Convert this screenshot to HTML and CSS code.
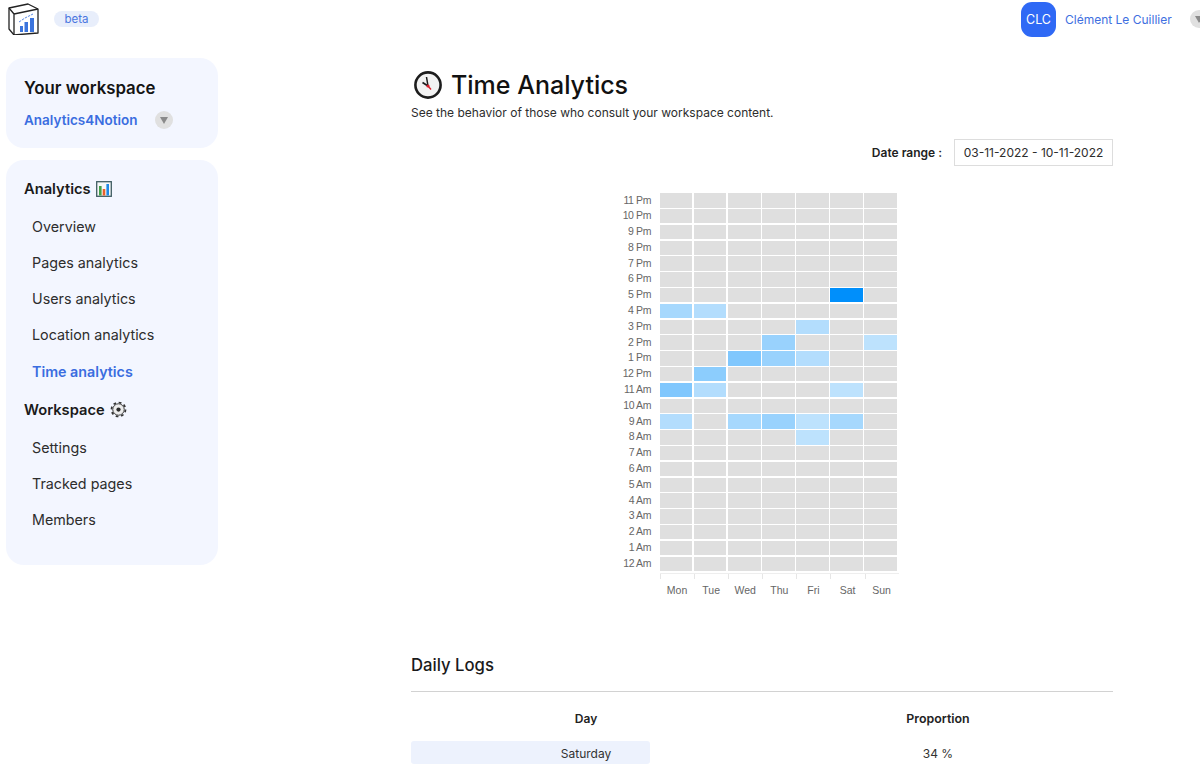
FILE: index.html
```html
<!DOCTYPE html>
<html lang="en">
<head>
<meta charset="utf-8">
<title>Time Analytics</title>
<link rel="stylesheet" href="styles.css">
</head>
<body>
<header class="topbar">
  <div class="brand">
    <svg class="logo" viewBox="0 0 32 32" fill="none" stroke="#222" stroke-width="1.3" stroke-linejoin="round">
      <path d="M1 5 L20 1 L30 6 L30 30 L6 32 L1 26 Z"/>
      <path d="M1 5 L6 11 L30 6 M6 11 L6 32"/>
      <g fill="#3b74dd" stroke="none">
        <rect x="12" y="23" width="3" height="6"/><rect x="16.5" y="19" width="3.5" height="10"/><rect x="22" y="15" width="4" height="14"/>
      </g>
      <path d="M11 19 L17 15 L25 11" stroke="#5d8be6" stroke-width="1" stroke-dasharray="2.5 1"/>
    </svg>
    <span class="beta">beta</span>
  </div>
  <div class="user">
    <span class="avatar">CLC</span>
    <span class="user-name">Clément Le Cuillier</span>
    <span class="caret-btn"><i class="caret"></i></span>
  </div>
</header>
<div class="page">
  <aside class="sidebar">
    <section class="card workspace">
      <h2>Your workspace</h2>
      <div class="ws-select"><span>Analytics4Notion</span><span class="caret-btn"><i class="caret"></i></span></div>
    </section>
    <nav class="card nav">
      <h3>Analytics
        <svg class="nav-icon" viewBox="0 0 16 16">
          <rect x=".7" y=".7" width="14.6" height="14.6" fill="#f4f8f8" stroke="#3f5d63" stroke-width="1.3"/>
          <rect x="3" y="5" width="2.6" height="9.5" fill="#43a047"/><rect x="6.7" y="8" width="2.6" height="6.5" fill="#e8602c"/><rect x="10.4" y="3" width="2.6" height="11.5" fill="#1e88e5"/>
        </svg>
      </h3>
      <a href="#">Overview</a>
      <a href="#">Pages analytics</a>
      <a href="#">Users analytics</a>
      <a href="#">Location analytics</a>
      <a href="#" class="active">Time analytics</a>
      <h3>Workspace
        <svg class="nav-icon gear" viewBox="0 0 16 16" fill="none" stroke="#333">
          <circle cx="8" cy="8" r="6.6" stroke-width="1.6" stroke-dasharray="2.6 2.58"/>
          <circle cx="8" cy="8" r="5.4" fill="#ececec" stroke-width=".9"/>
          <circle cx="8" cy="8" r="2" fill="#2a2a2a" stroke="none"/>
        </svg>
      </h3>
      <a href="#">Settings</a>
      <a href="#">Tracked pages</a>
      <a href="#">Members</a>
    </nav>
  </aside>
  <main class="main">
    <h1>
      <svg class="clock" viewBox="0 0 28 28">
        <circle cx="14" cy="14" r="12.6" fill="#f2f2f2" stroke="#1c1c1c" stroke-width="2.6"/>
        <path d="M14 15 L12.5 6" stroke="#1c1c1c" stroke-width="1.5"/>
        <path d="M14 15 L8.5 11.5" stroke="#1c1c1c" stroke-width="1.7"/>
        <path d="M14 15 L17 18.5" stroke="#d81e2c" stroke-width="1.4"/>
        <circle cx="14" cy="15" r="1.6" fill="#d81e2c"/>
      </svg>
      Time Analytics
    </h1>
    <p class="lead">See the behavior of those who consult your workspace content.</p>
    <div class="range"><strong>Date range :</strong><span class="range-input">03-11-2022 - 10-11-2022</span></div>
    <div class="chart">
      <div class="hm-row"><span class="hm-label">11 Pm</span><i></i><i></i><i></i><i></i><i></i><i></i><i></i></div>
      <div class="hm-row"><span class="hm-label">10 Pm</span><i></i><i></i><i></i><i></i><i></i><i></i><i></i></div>
      <div class="hm-row"><span class="hm-label">9 Pm</span><i></i><i></i><i></i><i></i><i></i><i></i><i></i></div>
      <div class="hm-row"><span class="hm-label">8 Pm</span><i></i><i></i><i></i><i></i><i></i><i></i><i></i></div>
      <div class="hm-row"><span class="hm-label">7 Pm</span><i></i><i></i><i></i><i></i><i></i><i></i><i></i></div>
      <div class="hm-row"><span class="hm-label">6 Pm</span><i></i><i></i><i></i><i></i><i></i><i></i><i></i></div>
      <div class="hm-row"><span class="hm-label">5 Pm</span><i></i><i></i><i></i><i></i><i></i><i class="max"></i><i></i></div>
      <div class="hm-row"><span class="hm-label">4 Pm</span><i class="l3"></i><i class="l4"></i><i></i><i></i><i></i><i></i><i></i></div>
      <div class="hm-row"><span class="hm-label">3 Pm</span><i></i><i></i><i></i><i></i><i class="l4"></i><i></i><i></i></div>
      <div class="hm-row"><span class="hm-label">2 Pm</span><i></i><i></i><i></i><i class="l2"></i><i></i><i></i><i class="l5"></i></div>
      <div class="hm-row"><span class="hm-label">1 Pm</span><i></i><i></i><i class="l1"></i><i class="l2"></i><i class="l4"></i><i></i><i></i></div>
      <div class="hm-row"><span class="hm-label">12 Pm</span><i></i><i class="l0"></i><i></i><i></i><i></i><i></i><i></i></div>
      <div class="hm-row"><span class="hm-label">11 Am</span><i class="l1"></i><i class="l4"></i><i></i><i></i><i></i><i class="l5"></i><i></i></div>
      <div class="hm-row"><span class="hm-label">10 Am</span><i></i><i></i><i></i><i></i><i></i><i></i><i></i></div>
      <div class="hm-row"><span class="hm-label">9 Am</span><i class="l4"></i><i></i><i class="l3"></i><i class="l2"></i><i class="l5"></i><i class="l3"></i><i></i></div>
      <div class="hm-row"><span class="hm-label">8 Am</span><i></i><i></i><i></i><i></i><i class="l5"></i><i></i><i></i></div>
      <div class="hm-row"><span class="hm-label">7 Am</span><i></i><i></i><i></i><i></i><i></i><i></i><i></i></div>
      <div class="hm-row"><span class="hm-label">6 Am</span><i></i><i></i><i></i><i></i><i></i><i></i><i></i></div>
      <div class="hm-row"><span class="hm-label">5 Am</span><i></i><i></i><i></i><i></i><i></i><i></i><i></i></div>
      <div class="hm-row"><span class="hm-label">4 Am</span><i></i><i></i><i></i><i></i><i></i><i></i><i></i></div>
      <div class="hm-row"><span class="hm-label">3 Am</span><i></i><i></i><i></i><i></i><i></i><i></i><i></i></div>
      <div class="hm-row"><span class="hm-label">2 Am</span><i></i><i></i><i></i><i></i><i></i><i></i><i></i></div>
      <div class="hm-row"><span class="hm-label">1 Am</span><i></i><i></i><i></i><i></i><i></i><i></i><i></i></div>
      <div class="hm-row"><span class="hm-label">12 Am</span><i></i><i></i><i></i><i></i><i></i><i></i><i></i></div>
      <div class="hm-axis"><span>Mon</span><span>Tue</span><span>Wed</span><span>Thu</span><span>Fri</span><span>Sat</span><span>Sun</span></div>
    </div>
    <h2 class="section-title">Daily Logs</h2>
    <div class="log-table">
      <div class="log-head">Day</div><div class="log-head">Proportion</div>
      <div class="log-cell log-day">Saturday</div><div class="log-cell">34 %</div>
    </div>
  </main>
</div>
</body>
</html>
```
FILE: styles.css
```css
* { box-sizing: border-box; }
html, body { margin: 0; height: 767px; overflow: hidden; background: #fff; }
body { font-family: Inter, "Noto Sans", sans-serif; color: #222; }

.topbar { display: flex; justify-content: space-between; align-items: flex-start; height: 58px; padding: 1px 0 0 8px; }
.brand { display: flex; align-items: center; gap: 14px; height: 36px; }
.logo { width: 32px; height: 32px; }
.beta { display: inline-block; width: 45px; height: 16px; border-radius: 8px; background: #e8eefb; color: #4a76e0; font-size: 11.5px; line-height: 16px; text-align: center; margin-bottom: 1px; }
.user { display: flex; align-items: center; height: 36px; width: 179px; }
.avatar { flex: none; width: 35px; height: 35px; border-radius: 11px; background: #2f69f5; color: #fff; font-size: 12.5px; line-height: 35px; text-align: center; }
.user-name { margin-left: 9px; color: #3e6fe0; font-size: 12px; white-space: nowrap; flex: none; width: 120px; }
.user .caret-btn { margin-left: 5px; }
.caret-btn { flex: none; display: inline-flex; align-items: center; justify-content: center; width: 18px; height: 18px; border-radius: 50%; background: #e0e0e0; }
.caret { width: 0; height: 0; border-left: 4px solid transparent; border-right: 4px solid transparent; border-top: 7px solid #8a8a8a; }

.page { display: flex; align-items: flex-start; }
.sidebar { flex: none; width: 212px; margin-left: 6px; display: flex; flex-direction: column; gap: 12px; }
.card { background: #f3f6ff; border-radius: 18px; padding-left: 18px; }
.workspace { height: 90px; padding-top: 19px; }
.workspace h2 { margin: 0; font-size: 16.8px; line-height: 22px; font-weight: 600; color: #141414; }
.ws-select { display: flex; align-items: center; gap: 17.5px; margin-top: 11px; height: 20px; color: #3a6de0; font-size: 13.5px; font-weight: 600; }
.nav { height: 405px; padding-top: 18px; }
.nav h3 { display: flex; align-items: center; gap: 5px; margin: 0; height: 21px; font-size: 14.7px; font-weight: 600; color: #1a1a1a; }
.nav-icon { width: 16px; height: 16px; }
.nav-icon.gear { width: 17px; height: 17px; }
.nav a { display: block; height: 36.3px; padding-left: 8px; color: #2d2d2d; font-size: 14.3px; line-height: 36.3px; text-decoration: none; }
.nav h3 + a { margin-top: 9.6px; }
.nav a.active { color: #3a6de0; font-weight: 600; }
.nav a + h3 { margin-top: 9px; }

.main { flex: none; width: 702px; margin-left: 193px; }
h1 { display: flex; align-items: center; gap: 9px; margin: 12px 0 0; height: 30px; padding-left: 3px; font-size: 25px; font-weight: 500; color: #111; }
.clock { width: 28px; height: 28px; }
.lead { margin: 4px 0 0; font-size: 12px; line-height: 18px; color: #2d2d2d; }
.range { display: flex; justify-content: flex-end; align-items: center; gap: 12px; margin-top: 17px; font-size: 12px; }
.range strong { font-weight: 600; color: #222; }
.range-input { width: 159px; height: 27px; border: 1px solid #ddd; font-size: 12px; line-height: 25px; text-align: center; color: #2d2d2d; }

.chart { margin: 26.5px 0 0 200px; width: 290px; }
.hm-row { display: grid; grid-template-columns: 38.3px repeat(7, 32.4px); column-gap: 1.7px; height: 15.8px; padding-left: 9px; }
.hm-label { font-family: "Liberation Sans", Arial, sans-serif; font-size: 10.5px; letter-spacing: -.4px; line-height: 15.8px; color: #666; text-align: right; width: 31px; white-space: nowrap; }
.hm-row i { display: block; height: 14.4px; margin-top: .7px; background: #dfdfdf; }
.hm-row i.max { background: #008ffb; }
.hm-row i.l0 { background: #8ccdfd; }
.hm-row i.l1 { background: #80c7fd; }
.hm-row i.l2 { background: #99d2fd; }
.hm-row i.l3 { background: #a6d8fd; }
.hm-row i.l4 { background: #b3ddfd; }
.hm-row i.l5 { background: #bde2fd; }
.hm-axis { display: grid; grid-template-columns: repeat(7, 34.1px); margin: 1px 0 0 49px; width: 238.7px; height: 24px; border-top: 1px solid #eee; font-family: "Liberation Sans", Arial, sans-serif; font-size: 10.5px; color: #666; text-align: center; line-height: 32px; background: repeating-linear-gradient(90deg, #e6e6e6 0 1px, transparent 1px 34.1px) top left / 100% 5px no-repeat; }

.section-title { margin: 53.5px 0 0; height: 42px; padding-top: 4px; font-size: 16.7px; line-height: 22px; font-weight: 500; color: #1a1a1a; border-bottom: 1.5px solid #d2d2d2; }
.log-table { display: grid; grid-template-columns: 239px 1fr; }
.log-head { font-size: 12px; font-weight: 600; height: 49px; line-height: 54px; text-align: center; color: #222; }
.log-head:first-child { width: 350px; }
.log-head:nth-child(2) { padding-left: 113px; font-size: 12.4px; }
.log-cell { height: 23px; font-size: 12px; line-height: 25px; text-align: center; color: #333; }
.log-day { background: #edf2fd; border-radius: 3px; padding-left: 111px; }
.log-cell:last-child { padding-left: 113px; }
```
